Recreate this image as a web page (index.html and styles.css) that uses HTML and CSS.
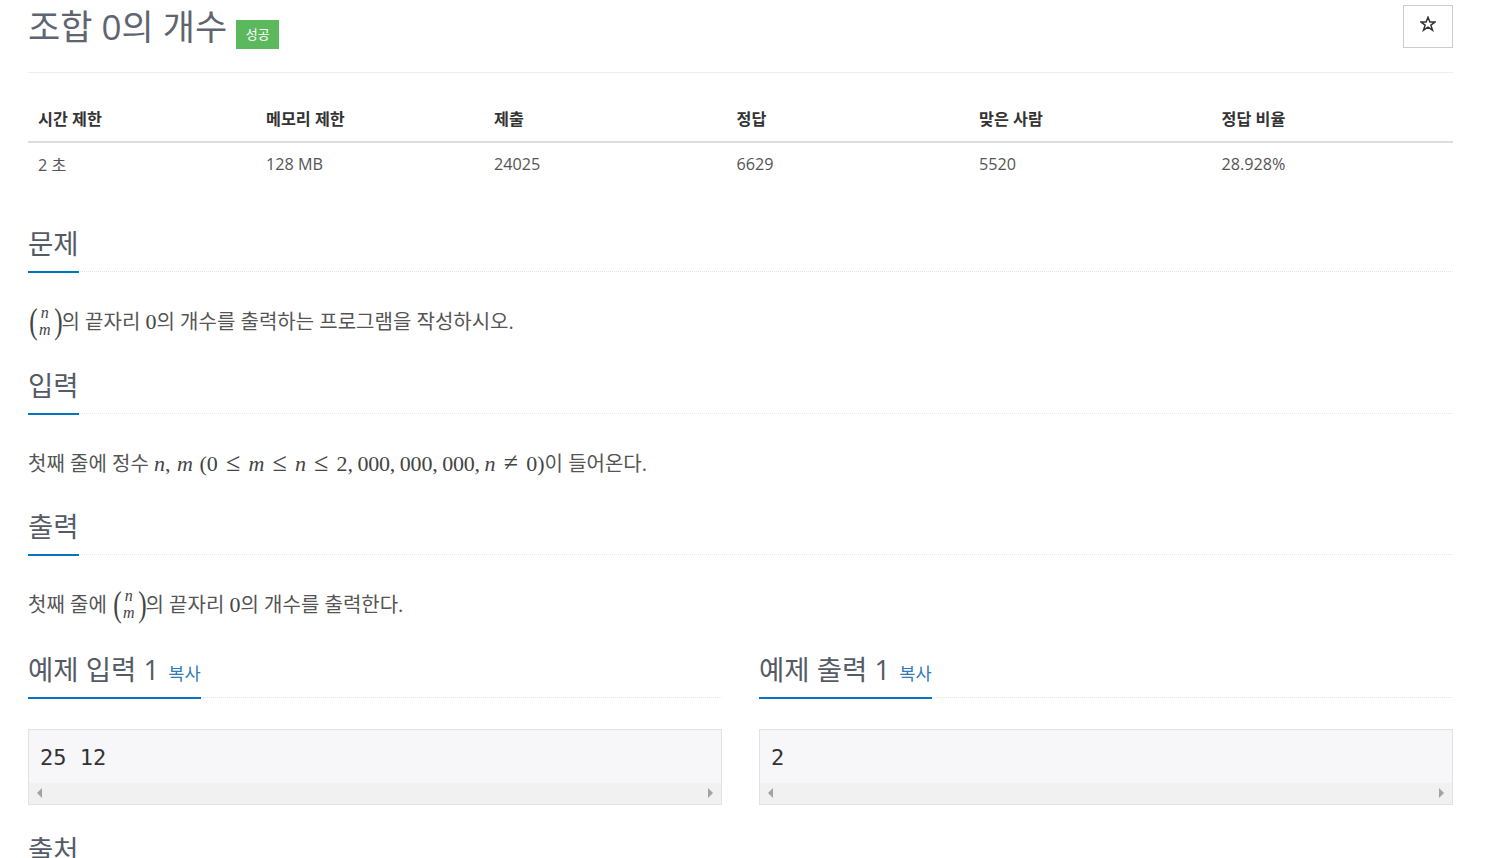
FILE: index.html
```html
<!DOCTYPE html>
<html lang="ko">
<head>
<meta charset="utf-8">
<title>조합 0의 개수</title>
<link rel="stylesheet" href="styles.css">
</head>
<body>
<main class="page">
  <header class="head">
    <h1 class="title"><span>조합 0의 개수</span><span class="badge">성공</span></h1>
    <button class="star" aria-label="즐겨찾기"><svg width="16" height="16" viewBox="0 0 16 16"><path d="M8 1.2 9.9 6h5.1l-4.1 3.1 1.6 5.1L8 11.1l-4.5 3.1 1.6-5.1L1 6h5.1z" fill="none" stroke="#333" stroke-width="1.5"/></svg></button>
  </header>
  <table class="stats">
    <thead><tr><th class="c1">시간 제한</th><th class="c1">메모리 제한</th><th class="c2">제출</th><th class="c2">정답</th><th class="c2">맞은 사람</th><th>정답 비율</th></tr></thead>
    <tbody><tr><td>2 초</td><td>128 MB</td><td>24025</td><td>6629</td><td>5520</td><td>28.928%</td></tr></tbody>
  </table>
  <section class="sec sec-first">
    <div class="hl"><h2>문제</h2></div>
    <p class="text"><span class="binom"><span class="paren">(</span><span class="stack"><i>n</i><i>m</i></span><span class="paren">)</span></span>의 끝자리 <span class="m">0</span>의 개수를 출력하는 프로그램을 작성하시오.</p>
  </section>
  <section class="sec">
    <div class="hl"><h2>입력</h2></div>
    <p class="text">첫째 줄에 정수 <span class="m"><i>n</i>, <i>m</i> (0 <span class="rel">≤</span> <i>m</i> <span class="rel">≤</span> <i>n</i> <span class="rel">≤</span> <span class="num">2, 000, 000, 000, </span><i>n</i> <span class="rel">≠</span> 0)</span>이 들어온다.</p>
  </section>
  <section class="sec">
    <div class="hl"><h2>출력</h2></div>
    <p class="text">첫째 줄에 <span class="binom"><span class="paren">(</span><span class="stack"><i>n</i><i>m</i></span><span class="paren">)</span></span>의 끝자리 <span class="m">0</span>의 개수를 출력한다.</p>
  </section>
  <div class="samples">
    <section>
      <div class="hl"><h2>예제 입력 1 <a class="copy">복사</a></h2></div>
      <div class="pre"><pre>25 12</pre><div class="bar"><span class="arr l"></span><span class="arr r"></span></div></div>
    </section>
    <section>
      <div class="hl"><h2>예제 출력 1 <a class="copy">복사</a></h2></div>
      <div class="pre"><pre>2</pre><div class="bar"><span class="arr l"></span><span class="arr r"></span></div></div>
    </section>
  </div>
  <section class="sec source"><div class="hl"><h2>출처</h2></div></section>
</main>
</body>
</html>
```
FILE: styles.css
```css
* { box-sizing: border-box; }
html, body { margin: 0; height: 858px; overflow: hidden; background: #fff; }
body { font-family: "Open Sans", "Noto Sans CJK KR", sans-serif; font-size: 16px; color: #333; }
.page { margin: 0 48px 0 28px; }
.head { height: 73px; border-bottom: 1px solid #eee; display: flex; justify-content: space-between; align-items: flex-start; }
.title { margin: 0; height: 54px; display: flex; align-items: center; font-size: 35px; font-weight: 400; color: #5f6570; line-height: 54px; }
.badge { margin: 14px 0 0 9px; width: 43px; height: 29px; background: #5cb85c; color: #fff; font-size: 13px; font-weight: 400; line-height: 29px; text-align: center; }
.star { margin-top: 5px; width: 50px; height: 43px; padding: 0 0 5px; background: #fff; border: 1px solid #ccc; display: flex; align-items: center; justify-content: center; }
.stats { width: 100%; margin-top: 26px; border-collapse: collapse; table-layout: fixed; }
.stats th { height: 43px; padding: 6px 10px 10px; text-align: left; font-size: 16.2px; font-weight: 700; border-bottom: 2px solid #ddd; color: #333; }
.stats td { height: 45px; padding: 9px 10px 11px; font-size: 16.2px; color: #555; }
.c1 { width: 228px; }
.c2 { width: 242.5px; }
.sec-first { margin-top: 38px; }
.hl { height: 47px; border-bottom: 1px dotted #e5e5e5; display: flex; align-items: flex-end; }
.hl h2 { margin: 0 0 -2px; height: 49px; padding: 0; font-size: 27.5px; font-weight: 400; line-height: 40px; color: #555b66; border-bottom: 2px solid #0076c0; }
.text { margin: 31px 0 0; height: 51.5px; font-size: 20px; line-height: 38px; color: #555; white-space: nowrap; }
.sec + .sec { margin-top: 12px; }
.m { font-family: "Liberation Serif", serif; font-size: 22px; color: #444; word-spacing: 1px; }
.num { letter-spacing: -.2px; word-spacing: -.6px; }
.rel { font-size: 26px; line-height: 20px; margin: 0 1.7px; }
.binom { display: inline-flex; align-items: center; vertical-align: middle; height: 30px; font-family: "Liberation Serif", serif; color: #444; margin-top: -6px; }
.paren { font-size: 36px; font-weight: 300; line-height: 30px; transform: scaleX(.7); width: 9px; }
.stack { display: flex; flex-direction: column; align-items: center; font-size: 16px; line-height: 17px; width: 15.5px; }
.samples { display: grid; grid-template-columns: 1fr 1fr; column-gap: 37px; margin-top: 12.5px; }
.samples .hl { height: 48px; }
.samples .hl h2 { height: 50px; padding-top: 1px; }
.copy { font-size: 17.6px; color: #337ab7; margin-left: 2px; }
.pre { margin-top: 31px; height: 76px; border: 1px solid #e1e1e8; background: #f7f7f9; display: flex; flex-direction: column; justify-content: space-between; }
.pre pre { margin: 0; padding: 9px 11px; font-family: "DejaVu Sans Mono", monospace; font-size: 22px; line-height: 37px; color: #333; height: 53px; }
.bar { height: 21px; background: #f1f1f1; position: relative; }
.arr { position: absolute; top: 5px; width: 0; height: 0; border-top: 5px solid transparent; border-bottom: 5px solid transparent; }
.arr.l { left: 8px; border-right: 5px solid #a3a3a3; }
.arr.r { right: 8px; border-left: 5px solid #a3a3a3; }
.source { margin-top: 26px; }
.source .hl h2 { border: 0; }
```
